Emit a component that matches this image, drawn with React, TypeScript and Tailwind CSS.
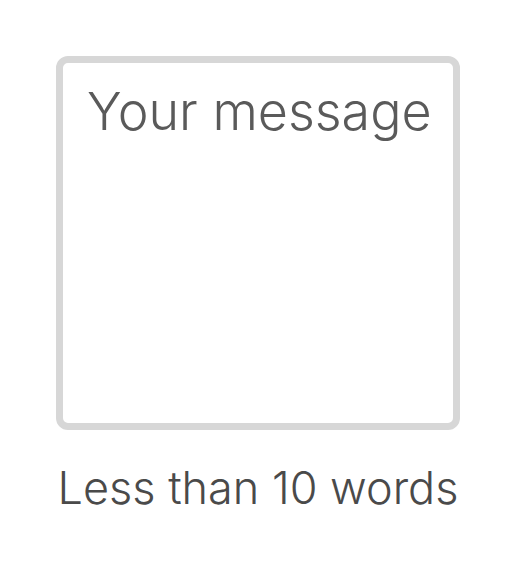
import React from 'react';

const App: React.FC = () => {
  return (
    <div className="w-[516px] h-[573px] bg-white flex flex-col items-center pt-[56px] font-['Inter',sans-serif] font-light">
      <textarea
        placeholder="Your message"
        className="w-[404px] h-[374px] border-[7px] border-[#d7d7d7] rounded-[12px] resize-none outline-none pl-[24px] pr-[6px] pt-[18px] text-[52px] leading-[1.2] font-light text-[#555] placeholder:text-[#5a5a5a] font-['Inter',sans-serif]"
      />
      <p className="mt-[35px] text-[45px] leading-none text-[#4a4a4a]">Less than 10 words</p>
    </div>
  );
};

export default App;
